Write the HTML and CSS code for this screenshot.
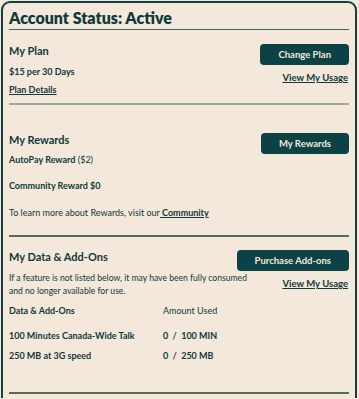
FILE: index.html
```html
<!DOCTYPE html>
<html lang="en">
<head>
    <meta charset="UTF-8">
    <meta name="viewport" content="width=device-width, initial-scale=1.0">
    <title>Account Status</title>
    <link rel="stylesheet" href="styles.css">
</head>
<body>
    <div class="card">
        <h1>Account Status: Active</h1>

        <div class="section plan">
            <div class="section-head">
                <h2>My Plan</h2>
                <button class="action-button">Change Plan</button>
            </div>
            <div class="row">
                <p class="strong">$15 per 30 Days</p>
                <a href="#" class="usage-link">View My Usage</a>
            </div>
            <p><a href="#" class="link">Plan Details</a></p>
        </div>

        <div class="section rewards">
            <div class="section-head">
                <h2>My Rewards</h2>
                <button class="action-button">My Rewards</button>
            </div>
            <p class="reward"><b>AutoPay Reward</b> ($2)</p>
            <p class="reward"><b>Community Reward $0</b></p>
            <p class="reward learn">To learn more about Rewards, visit our<a href="#" class="link"> Community</a></p>
        </div>

        <div class="section addons">
            <div class="section-head">
                <h2>My Data &amp; Add-Ons</h2>
                <button class="action-button">Purchase Add-ons</button>
            </div>
            <div class="row">
                <p class="note">If a feature is not listed below, it may have been fully consumed and no longer available for use.</p>
                <a href="#" class="usage-link">View My Usage</a>
            </div>
            <table>
                <tr class="table-head">
                    <th>Data &amp; Add-Ons</th>
                    <td>Amount Used</td>
                </tr>
                <tr>
                    <th>100 Minutes Canada-Wide Talk</th>
                    <td class="strong">0 &nbsp;/ &nbsp;100 MIN</td>
                </tr>
                <tr>
                    <th>250 MB at 3G speed</th>
                    <td class="strong">0 &nbsp;/ &nbsp;250 MB</td>
                </tr>
            </table>
        </div>
    </div>
</body>
</html>
```

FILE: styles.css
```css
body {
    margin: 0;
    background-color: #f3e8da;
    font-family: Lato, "Noto Sans", sans-serif;
    color: #10393c;
}
.card {
    margin: 1px 2px 0 1px;
    border: 2px solid #163f40;
    border-bottom: none;
    border-radius: 9px 9px 0 0;
    padding: 4px 6px 4px 6px;
}
h1 {
    margin: 0;
    font-size: 16px;
    font-weight: 800;
    line-height: 22px;
    border-bottom: 1px solid #3f6460;
}
p {
    margin: 0;
    font-size: 9px;
    line-height: 12px;
}
.strong, b {
    font-weight: 700;
}
.section {
    border-bottom: 2px solid #56685f;
}
.section-head {
    display: flex;
    justify-content: space-between;
    align-items: flex-start;
}
h2 {
    margin: 0;
    font-size: 11px;
    font-weight: 700;
    line-height: 13px;
}
.action-button {
    background-color: #0c4246;
    color: #f3e8da;
    border: none;
    border-radius: 4px;
    font-family: inherit;
    font-size: 9.5px;
    font-weight: 700;
    height: 21px;
    padding: 0 18px;
}
.row {
    display: flex;
    justify-content: space-between;
    align-items: flex-start;
    margin-top: 1px;
}
.usage-link {
    color: #10393c;
    font-weight: 700;
    font-size: 9.5px;
    line-height: 12px;
    margin-top: 6px;
    margin-right: 1px;
}
.link {
    color: #10393c;
    font-weight: 700;
}

/* Plan */
.plan {
    padding-top: 14px;
    padding-bottom: 7px;
    border-bottom-color: #a0aba1;
}

/* Rewards */
.rewards {
    padding-top: 28px;
    padding-bottom: 16px;
}
.reward {
    margin-top: 14px;
}
.rewards .section-head + .reward {
    margin-top: 0;
}
.reward.learn {
    margin-top: 15px;
}

/* Data y add-ons */
.addons {
    padding-top: 13px;
    padding-bottom: 22px;
}
.note {
    width: 252px;
    font-size: 8.6px;
    line-height: 13px;
}
table {
    border-collapse: collapse;
    font-size: 9px;
    line-height: 12px;
    margin-top: 7px;
}
th {
    text-align: left;
    font-weight: 700;
    padding: 0 19px 8px 0;
    width: 135px;
}
td {
    padding: 0 0 8px 0;
}
.table-head th, .table-head td {
    padding-bottom: 13px;
}
```
